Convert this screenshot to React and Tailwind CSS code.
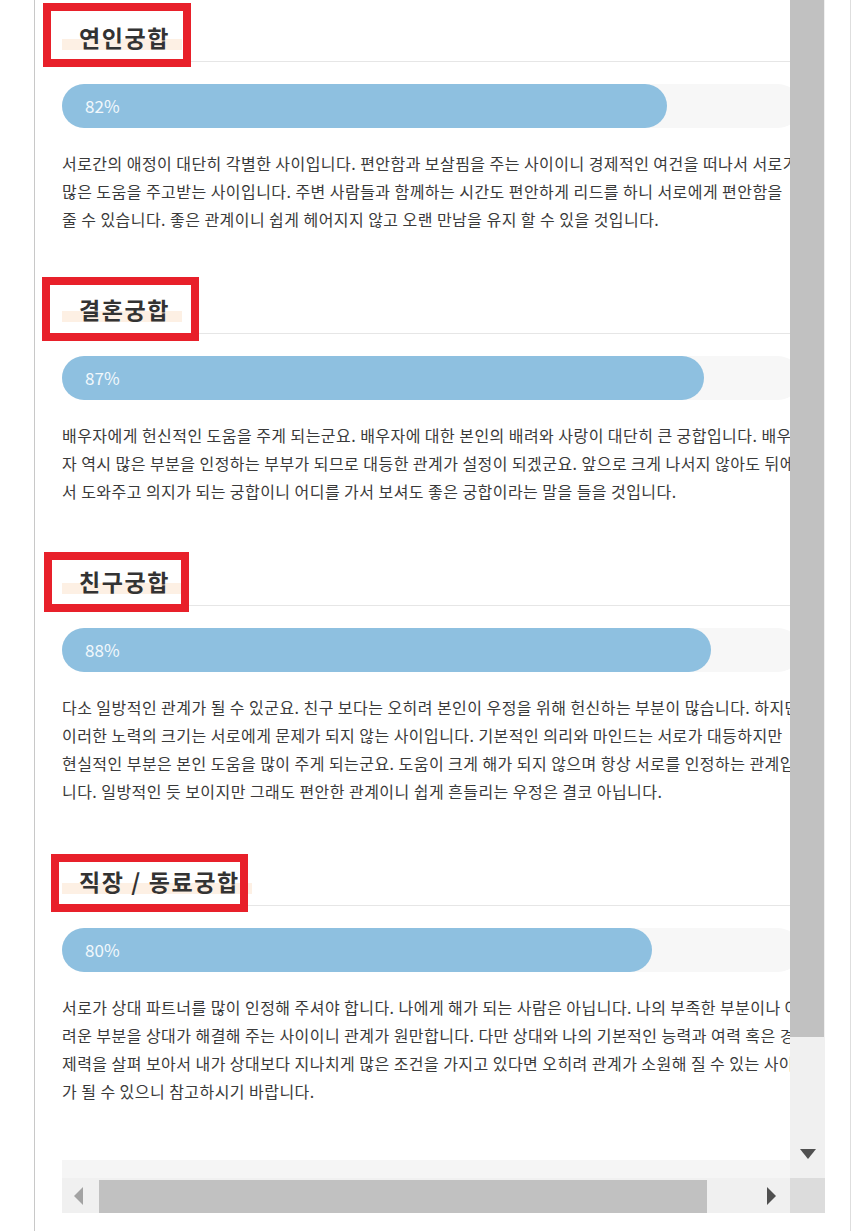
// each paragraph keeps its original line breaks
const sections = [
  {
    title: '연인궁합',
    pct: 82,
    lines: [
      '서로간의 애정이 대단히 각별한 사이입니다. 편안함과 보살핌을 주는 사이이니 경제적인 여건을 떠나서 서로가',
      '많은 도움을 주고받는 사이입니다. 주변 사람들과 함께하는 시간도 편안하게 리드를 하니 서로에게 편안함을',
      '줄 수 있습니다. 좋은 관계이니 쉽게 헤어지지 않고 오랜 만남을 유지 할 수 있을 것입니다.',
    ],
  },
  {
    title: '결혼궁합',
    pct: 87,
    lines: [
      '배우자에게 헌신적인 도움을 주게 되는군요. 배우자에 대한 본인의 배려와 사랑이 대단히 큰 궁합입니다. 배우',
      '자 역시 많은 부분을 인정하는 부부가 되므로 대등한 관계가 설정이 되겠군요. 앞으로 크게 나서지 않아도 뒤에',
      '서 도와주고 의지가 되는 궁합이니 어디를 가서 보셔도 좋은 궁합이라는 말을 들을 것입니다.',
    ],
  },
  {
    title: '친구궁합',
    pct: 88,
    lines: [
      '다소 일방적인 관계가 될 수 있군요. 친구 보다는 오히려 본인이 우정을 위해 헌신하는 부분이 많습니다. 하지만',
      '이러한 노력의 크기는 서로에게 문제가 되지 않는 사이입니다. 기본적인 의리와 마인드는 서로가 대등하지만',
      '현실적인 부분은 본인 도움을 많이 주게 되는군요. 도움이 크게 해가 되지 않으며 항상 서로를 인정하는 관계입',
      '니다. 일방적인 듯 보이지만 그래도 편안한 관계이니 쉽게 흔들리는 우정은 결코 아닙니다.',
    ],
  },
  {
    title: '직장 / 동료궁합',
    pct: 80,
    lines: [
      '서로가 상대 파트너를 많이 인정해 주셔야 합니다. 나에게 해가 되는 사람은 아닙니다. 나의 부족한 부분이나 어',
      '려운 부분을 상대가 해결해 주는 사이이니 관계가 원만합니다. 다만 상대와 나의 기본적인 능력과 여력 혹은 경',
      '제력을 살펴 보아서 내가 상대보다 지나치게 많은 조건을 가지고 있다면 오히려 관계가 소원해 질 수 있는 사이',
      '가 될 수 있으니 참고하시기 바랍니다.',
    ],
  },
];

// red marker boxes drawn over the headings
const marks = [
  { left: 43, top: 3, width: 148, height: 64 },
  { left: 42, top: 277, width: 157, height: 64 },
  { left: 44, top: 552, width: 145, height: 60 },
  { left: 51, top: 854, width: 197, height: 58 },
];

function Section({ title, pct, lines }) {
  return (
    <div className="mb-[39px]">
      <div className="border-b border-[#e6e6e6] pt-[21px] pb-[8px]">
        <h3 className="inline-block pl-[17px] pr-[12px] text-[23px] leading-[32px] font-bold tracking-[1.6px] text-[#333] bg-[linear-gradient(transparent_56%,#fdf0e4_56%,#fdf0e4_91%,transparent_91%)]">
          {title}
        </h3>
      </div>
      <div className="mt-[22px] h-[44px] w-[738px] rounded-full bg-[#f7f7f7]">
        <div
          className="flex h-full items-center rounded-full bg-[#8ec0e0] pl-[23px] text-[17px] text-[#f2f8fc]"
          style={{ width: `${pct}%` }}
        >
          {pct}%
        </div>
      </div>
      <p className="mt-[21px] text-[16px] leading-[28px] tracking-[0.45px] text-[#3a3a3a]">
        {lines.map((line, i) => (
          <span key={i} className="block whitespace-nowrap">
            {line}
          </span>
        ))}
      </p>
    </div>
  );
}

export default function App() {
  return (
    <div className="relative h-[1231px] w-[852px] overflow-hidden bg-white font-['Noto_Sans_CJK_KR','Noto_Sans',sans-serif]">
      <div className="ml-[34px] flex h-full w-[817px] border-l border-r border-l-[#c8c8c8] border-r-[#dedede] pl-[27px]">
        <div className="grid h-[1213px] w-[763px] grid-cols-[728px_35px] grid-rows-[1178px_35px]">
          {/* scrolled content */}
          <div className="flex flex-col overflow-hidden">
            <div className="w-[741px] shrink-0">
              {sections.map(s => (
                <Section key={s.title} {...s} />
              ))}
            </div>
            <div className="mt-auto h-[18px] w-full bg-[#f5f5f5]" />
          </div>

          {/* vertical scrollbar */}
          <div className="flex flex-col bg-[#f0f0f0]">
            <div className="h-[1037px] w-[34px] bg-[#c1c1c1]" />
            <div className="flex-1" />
            <div className="flex h-[37px] items-center justify-center pb-[12px]">
              <div className="h-0 w-0 border-l-[8px] border-r-[8px] border-t-[10px] border-l-transparent border-r-transparent border-t-[#505050]" />
            </div>
          </div>

          {/* horizontal scrollbar */}
          <div className="flex bg-[#f0f0f0]">
            <div className="flex w-[37px] items-center justify-center pr-[4px]">
              <div className="h-0 w-0 border-t-[9px] border-b-[9px] border-r-[9px] border-t-transparent border-b-transparent border-r-[#a3a3a3]" />
            </div>
            <div className="mt-[2px] h-[33px] w-[608px] bg-[#c1c1c1]" />
            <div className="flex flex-1 items-center justify-end pr-[14px]">
              <div className="h-0 w-0 border-t-[9px] border-b-[9px] border-l-[9px] border-t-transparent border-b-transparent border-l-[#505050]" />
            </div>
          </div>
          <div className="bg-[#dcdcdc]" />
        </div>
      </div>

      {marks.map((m, i) => (
        <div
          key={i}
          className="pointer-events-none absolute border-[8px] border-[#e8202a]"
          style={{ left: m.left, top: m.top, width: m.width, height: m.height }}
        />
      ))}
    </div>
  );
}
